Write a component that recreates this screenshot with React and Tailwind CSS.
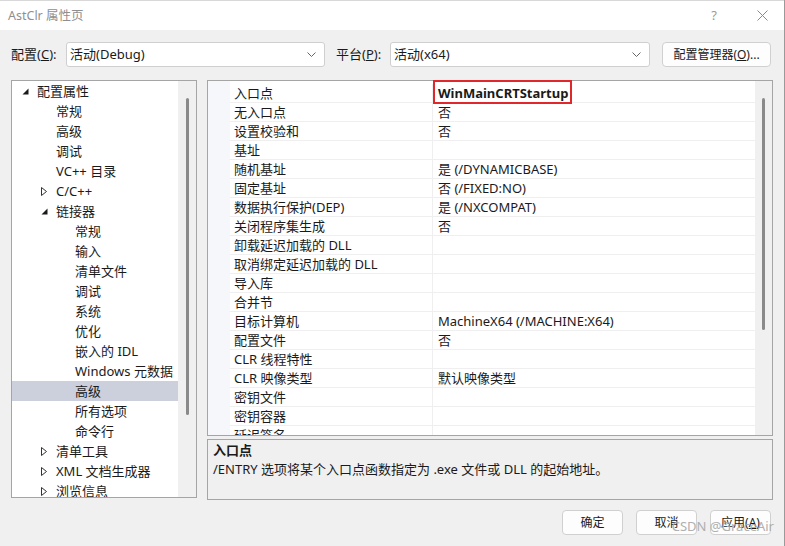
import { useState } from 'react';

const FONT = { fontFamily: '"Noto Sans", "Noto Sans CJK SC", sans-serif' };

const tree = [
  { label: '配置属性', level: 0, arrow: 'open' },
  { label: '常规', level: 1 },
  { label: '高级', level: 1 },
  { label: '调试', level: 1 },
  { label: 'VC++ 目录', level: 1 },
  { label: 'C/C++', level: 1, arrow: 'closed' },
  { label: '链接器', level: 1, arrow: 'open' },
  { label: '常规', level: 2 },
  { label: '输入', level: 2 },
  { label: '清单文件', level: 2 },
  { label: '调试', level: 2 },
  { label: '系统', level: 2 },
  { label: '优化', level: 2 },
  { label: '嵌入的 IDL', level: 2 },
  { label: 'Windows 元数据', level: 2 },
  { label: '高级', level: 2, selected: true },
  { label: '所有选项', level: 2 },
  { label: '命令行', level: 2 },
  { label: '清单工具', level: 1, arrow: 'closed' },
  { label: 'XML 文档生成器', level: 1, arrow: 'closed' },
  { label: '浏览信息', level: 1, arrow: 'closed' },
];

const props = [
  ['入口点', 'WinMainCRTStartup'],
  ['无入口点', '否'],
  ['设置校验和', '否'],
  ['基址', ''],
  ['随机基址', '是 (/DYNAMICBASE)'],
  ['固定基址', '否 (/FIXED:NO)'],
  ['数据执行保护(DEP)', '是 (/NXCOMPAT)'],
  ['关闭程序集生成', '否'],
  ['卸载延迟加载的 DLL', ''],
  ['取消绑定延迟加载的 DLL', ''],
  ['导入库', ''],
  ['合并节', ''],
  ['目标计算机', 'MachineX64 (/MACHINE:X64)'],
  ['配置文件', '否'],
  ['CLR 线程特性', ''],
  ['CLR 映像类型', '默认映像类型'],
  ['密钥文件', ''],
  ['密钥容器', ''],
  ['延迟签名', ''],
];

const indent = ['pl-[10px]', 'pl-[29px]', 'pl-[48px]'];

function Arrow({ kind }) {
  if (kind === 'open') {
    return (
      <svg width="7" height="7" viewBox="0 0 7 7">
        <polygon points="6.5,0.5 6.5,6.5 0.5,6.5" fill="#1a1a1a" />
      </svg>
    );
  }
  if (kind === 'closed') {
    return (
      <svg width="6" height="9" viewBox="0 0 6 9">
        <polygon points="0.5,0.5 5.5,4.5 0.5,8.5" fill="none" stroke="#333" strokeWidth="1" />
      </svg>
    );
  }
  return null;
}

function Chevron() {
  return (
    <svg width="9" height="6" viewBox="0 0 9 6" className="shrink-0">
      <polyline points="0.5,0.5 4.5,4.5 8.5,0.5" fill="none" stroke="#666" strokeWidth="1" />
    </svg>
  );
}

function Combo({ value, width }) {
  return (
    <div className={`${width} h-[25px] bg-white border border-[#cfcfcf] rounded-[3px] flex items-center justify-between pl-[3px] pr-[8px]`}>
      <span className="text-[13px] text-[#1a1a1a]">{value}</span>
      <Chevron />
    </div>
  );
}

function Button({ children, width }) {
  return (
    <div className={`${width} h-[25px] bg-[#fdfdfd] border border-[#d0d0d0] rounded-[4px] flex items-center justify-center text-[12px] text-[#1a1a1a]`}>
      {children}
    </div>
  );
}

export default function App() {
  const [selected] = useState(0);

  return (
    <div style={FONT} className="w-[785px] h-[546px] overflow-hidden bg-[#f0f0f0] flex flex-col relative border-r border-[#9a9a9a] leading-[19px]">
      {/* title bar */}
      <div className="h-[30px] bg-white flex items-center pl-[8px] pr-[16px] border-t border-[#d8d8d8] shrink-0">
        <span className="text-[12.5px] text-[#8f8f8f]">AstClr 属性页</span>
        <span className="ml-auto mr-[40px] text-[13px] text-[#9a9a9a]">?</span>
        <svg width="11" height="11" viewBox="0 0 11 11">
          <path d="M0.5 0.5 L10.5 10.5 M10.5 0.5 L0.5 10.5" stroke="#8a8a8a" strokeWidth="1" />
        </svg>
      </div>

      {/* configuration row */}
      <div className="flex items-center pt-[12px] h-[37px] shrink-0 text-[13px] text-[#1a1a1a]">
        <span className="pl-[11px] w-[66px]">配置(<span className="underline">C</span>):</span>
        <Combo value="活动(Debug)" width="w-[259px]" />
        <span className="pl-[11px] w-[65px]">平台(<span className="underline">P</span>):</span>
        <Combo value="活动(x64)" width="w-[260px]" />
        <div className="ml-[12px]">
          <Button width="w-[109px]">配置管理器(<span className="underline">O</span>)...</Button>
        </div>
      </div>

      {/* main area */}
      <div className="flex pt-[13px] pl-[11px] shrink-0">
        {/* tree */}
        <div className="w-[186px] h-[418px] border border-[#a5a5a5] bg-white flex overflow-hidden">
          <div className="flex-1 flex flex-col">
            {tree.map((t, i) => (
              <div
                key={i}
                className={`h-[20px] shrink-0 flex items-center text-[13px] text-[#1a1a1a] ${indent[t.level]} ${t.selected ? 'bg-[#ccd0dc]' : ''}`}
              >
                <span className="w-[15px] flex items-center">
                  <Arrow kind={t.arrow} />
                </span>
                <span>{t.label}</span>
              </div>
            ))}
          </div>
          <div className="w-[18px] bg-[#f0f0f0] flex justify-center pt-[17px] pl-[1px]">
            <div className="w-[3px] h-[317px] bg-[#8a8a8a] rounded-full" />
          </div>
        </div>

        {/* right column */}
        <div className="ml-[10px] w-[566px] flex flex-col">
          {/* property grid */}
          <div className="h-[356px] border border-[#a5a5a5] bg-white flex relative">
            <div className="absolute left-[225px] top-[-1px] w-[139px] h-[24px] border-2 border-[#e0282c] z-10" />
            <div className="w-[22px] bg-[#f5f7fa] shrink-0" />
            <div className="flex-1 flex flex-col pt-[3px] overflow-hidden">
              {props.map(([name, value], i) => (
                <div key={i} className="h-[19px] shrink-0 flex border-b border-[#efefef] text-[13px] text-[#1a1a1a]">
                  <div className="w-[203px] shrink-0 pl-[4px] border-r border-[#efefef] whitespace-nowrap">{name}</div>
                  <div className={`pl-[5px] whitespace-nowrap ${i === selected ? 'font-bold' : ''}`}>{value}</div>
                </div>
              ))}
            </div>
            <div className="w-[17px] bg-[#f0f0f0] shrink-0 flex justify-center pt-[17px]">
              <div className="w-[3px] h-[232px] bg-[#8a8a8a] rounded-full" />
            </div>
          </div>

          {/* description */}
          <div className="mt-[3px] h-[61px] border border-[#a5a5a5] bg-[#f0f0f0] px-[5px] pt-[1px] text-[13px] text-[#1a1a1a]">
            <div className="font-bold">入口点</div>
            <div>/ENTRY 选项将某个入口点函数指定为 .exe 文件或 DLL 的起始地址。</div>
          </div>
        </div>
      </div>

      {/* buttons */}
      <div className="flex justify-end gap-[13px] pr-[13px] pt-[10px]">
        <Button width="w-[61px]">确定</Button>
        <Button width="w-[61px]">取消</Button>
        <Button width="w-[61px]">应用(<span className="underline">A</span>)</Button>
      </div>

      <div className="absolute right-[10px] bottom-[10px] text-[13px] text-[#a8a8a8] opacity-90">CSDN @GraceAir</div>
    </div>
  );
}
